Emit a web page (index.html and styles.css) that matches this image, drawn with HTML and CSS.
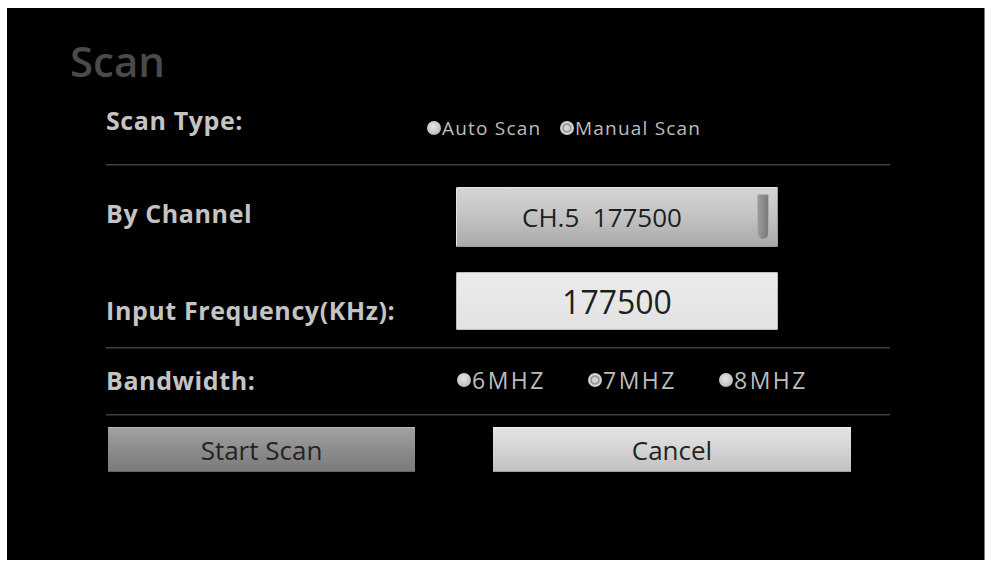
FILE: index.html
```html
<!DOCTYPE html>
<html>
<head>
<meta charset="utf-8">
<link rel="stylesheet" href="styles.css">
</head>
<body>
<div class="screen">
  <h1 class="title">Scan</h1>
  <div class="content">
    <div class="row type-row">
      <span class="label label-type">Scan Type:</span>
      <div class="radios type-radios">
        <span class="radio type-item"><span class="dot"></span>Auto Scan</span>
        <span class="radio type-item"><span class="dot dot-on"></span>Manual Scan</span>
      </div>
    </div>
    <div class="divider"></div>
    <div class="fields">
      <span class="label label-ch">By Channel</span>
      <div class="select">
        <span class="select-text">CH.5&nbsp; 177500</span>
        <span class="thumb"></span>
      </div>
      <span class="label label-freq">Input Frequency(KHz):</span>
      <div class="input">177500</div>
    </div>
    <div class="divider"></div>
    <div class="row bw-row">
      <span class="label label-bw">Bandwidth:</span>
      <div class="radios bw-radios">
        <span class="radio bw-item"><span class="dot"></span>6MHZ</span>
        <span class="radio bw-item"><span class="dot dot-on"></span>7MHZ</span>
        <span class="radio bw-item"><span class="dot"></span>8MHZ</span>
      </div>
    </div>
    <div class="divider"></div>
    <div class="buttons">
      <button class="btn btn-start">Start Scan</button>
      <button class="btn btn-cancel">Cancel</button>
    </div>
  </div>
</div>
</body>
</html>
```

FILE: styles.css
```css
html, body {
  margin: 0;
  padding: 0;
  background: #ffffff;
}

body {
  font-family: "Open Sans", "Noto Sans", "DejaVu Sans", sans-serif;
}

.screen {
  margin: 8px 0 0 7px;
  width: 978px;
  height: 552px;
  background: #000000;
  box-sizing: border-box;
  border-right: 1px solid #7a7a7a;
  overflow: hidden;
}

.title {
  margin: 0 0 10px 63px;
  padding-top: 28px;
  height: 50px;
  font-size: 42px;
  line-height: 50px;
  font-weight: 600;
  color: #4a4a4a;
}

.content {
  margin-left: 99px;
  width: 784px;
}

.row {
  display: flex;
  align-items: flex-start;
  box-sizing: border-box;
}

.label {
  font-size: 25px;
  line-height: 30px;
  font-weight: 700;
  color: #c4c4c4;
  letter-spacing: 0.6px;
  white-space: nowrap;
}

.type-row {
  height: 68px;
  padding-top: 9px;
}

.label-type {
  width: 321px;
}

.radios {
  display: flex;
  align-items: center;
}

.radio {
  display: flex;
  align-items: center;
  color: #bdbdbd;
  white-space: nowrap;
}

.type-radios {
  margin-top: 14px;
}

.type-item {
  width: 133px;
  font-size: 19px;
  line-height: 18px;
  letter-spacing: 1.2px;
}

.dot {
  display: block;
  width: 14px;
  height: 14px;
  min-width: 14px;
  border-radius: 50%;
  margin-right: 1px;
  flex: none;
  background: radial-gradient(circle at 45% 40%, #e6e6e6 0%, #c8c8c8 55%, #929292 100%);
}

.dot-on {
  background: radial-gradient(circle at 50% 50%, #d2d2d2 0%, #d2d2d2 26%, #8a8a8a 38%, #d8d8d8 56%, #9a9a9a 100%);
}

.divider {
  height: 2px;
  box-sizing: border-box;
  border-top: 1px solid #404040;
  border-bottom: 1px solid #202020;
}

.fields {
  display: grid;
  grid-template-columns: 350px 322px;
  grid-template-rows: 60px 58px;
  row-gap: 25px;
  padding: 21px 0 17px;
}

.label-ch {
  padding-top: 11px;
}

.label-freq {
  padding-top: 23px;
}

.select {
  position: relative;
  display: flex;
  align-items: center;
  justify-content: center;
  border-radius: 2px;
  background: linear-gradient(#d6d6d6, #c2c2c2 50%, #a9a9a9);
  box-shadow: inset 1px 1px 0 #e4e4e4, inset -1px -1px 0 #9a9a9a;
}

.select-text {
  margin-right: 30px;
  font-size: 26px;
  color: #1e1e1e;
}

.thumb {
  position: absolute;
  right: 10px;
  top: 8px;
  width: 10px;
  height: 44px;
  border-radius: 1px 1px 5px 5px;
  background: linear-gradient(90deg, #9a9a9a, #7a7a7a);
  box-shadow: 0 0 0 1px #b0b0b0;
}

.input {
  display: flex;
  align-items: center;
  justify-content: center;
  border-radius: 2px;
  background: linear-gradient(#ececec, #e2e2e2);
  box-shadow: inset 0 0 0 1px #bdbdbd;
  font-size: 32px;
  color: #1e1e1e;
}

.bw-row {
  height: 65px;
  padding-top: 16px;
}

.label-bw {
  width: 351px;
}

.bw-radios {
  margin-top: 1px;
}

.bw-item {
  width: 131px;
  font-size: 23px;
  line-height: 28px;
  letter-spacing: 2.5px;
}

.buttons {
  display: flex;
  gap: 78px;
  margin-top: 11px;
  padding-left: 2px;
}

.btn {
  height: 45px;
  border: none;
  border-radius: 1px;
  font-family: "Open Sans", "Noto Sans", sans-serif;
  font-size: 26px;
  color: #242424;
  padding: 0;
}

.btn-start {
  width: 307px;
  background: linear-gradient(#a2a2a2, #8c8c8c 50%, #7a7a7a);
  box-shadow: inset 0 1px 0 #b8b8b8, inset 0 -1px 0 #666;
}

.btn-cancel {
  width: 358px;
  background: linear-gradient(#e4e4e4, #d4d4d4 50%, #c0c0c0);
  box-shadow: inset 0 1px 0 #f0f0f0, inset 0 -1px 0 #a0a0a0;
}
```
